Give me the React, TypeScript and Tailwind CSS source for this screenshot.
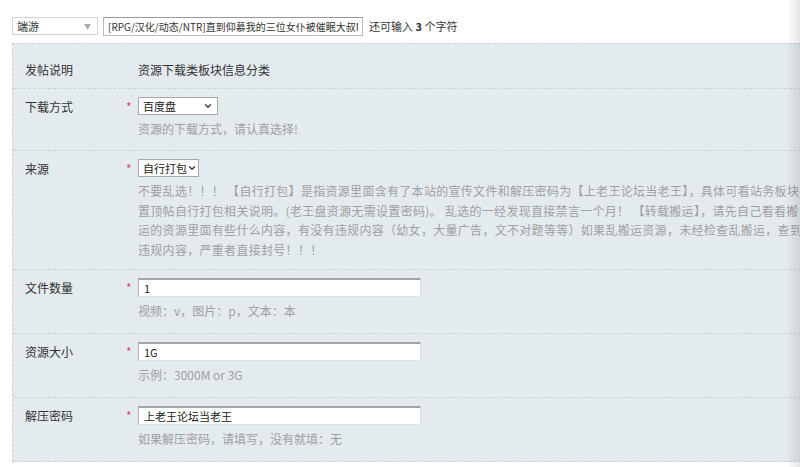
import { ChevronDown } from 'lucide-react'

const font = { fontFamily: '"Noto Sans CJK SC", "Noto Sans", sans-serif' }

function Label({ children }: { children: React.ReactNode }) {
  return <div className="w-[101px] shrink-0 leading-5 text-[12px] text-[#333]">{children}</div>
}

function Star() {
  return <div className="w-[12px] shrink-0 leading-5 text-[12px] text-[#e5484d]">*</div>
}

function Select({ value, width }: { value: string; width: string }) {
  return (
    <div
      className={`${width} h-[18px] flex items-center justify-between whitespace-nowrap bg-white border border-[#a8a8a8] pl-[4px] pr-[4px] text-[11px] text-[#222]`}
    >
      <span>{value}</span>
      <ChevronDown size={10} strokeWidth={3} className="shrink-0 text-[#333]" />
    </div>
  )
}

function TextInput({ value }: { value: string }) {
  return (
    <div className="w-[283px] h-[19px] flex items-center bg-white border border-[#e0e0e0] border-t-2 border-t-[#a5a5a5] border-l-[#b5b5b5] pl-[5px] text-[11px] text-[#222]">
      {value}
    </div>
  )
}

function Hint({ children }: { children: React.ReactNode }) {
  return <div className="mt-1 leading-5 text-[12px] text-[#a0a0a0] whitespace-nowrap">{children}</div>
}

export default function App() {
  return (
    <div className="relative w-[800px] h-[467px] overflow-hidden bg-white" style={font}>
      {/* Title bar */}
      <div className="flex items-start h-[43px] pl-[12px] pt-[17px]">
        <div className="w-[86px] h-[18px] flex items-center justify-between border border-[#d5d5d5] pl-[4px] pr-[6px] text-[11px] text-[#333]">
          <span>端游</span>
          <span className="text-[7px] text-[#aaa]">▼</span>
        </div>
        <div className="ml-[5px] w-[260px] h-[19px] overflow-hidden border border-[#bbb] border-t-[#999]">
          <div className="w-[254px] h-full flex items-center overflow-hidden whitespace-nowrap pl-[4px] text-[10px] text-[#333]">
            [RPG/汉化/动态/NTR]直到仰慕我的三位女仆被催眠大叔N
          </div>
        </div>
        <div className="ml-[6px] h-[19px] flex items-center text-[11px] text-[#333] whitespace-nowrap">
          还可输入&nbsp;<b>3</b>&nbsp;个字符
        </div>
      </div>

      {/* Form panel */}
      <div className="ml-[12px] w-[900px] bg-[#e4ebef] border-t border-l border-dashed border-[#cbd3d8]">
        <div className="flex pl-[12px] pt-[16px] pb-[8px] border-b border-dashed border-[#cbd3d8]">
          <Label>发帖说明</Label>
          <div className="w-[12px]" />
          <div className="leading-5 text-[12px] text-[#333]">资源下载类板块信息分类</div>
        </div>

        <div className="flex pl-[12px] pt-[8px] pb-[11px] border-b border-dashed border-[#cbd3d8]">
          <Label>下载方式</Label>
          <Star />
          <div>
            <Select value="百度盘" width="w-[80px]" />
            <Hint>资源的下载方式，请认真选择!</Hint>
          </div>
        </div>

        <div className="flex pl-[12px] pt-[8px] pb-[10px] border-b border-dashed border-[#cbd3d8]">
          <Label>来源</Label>
          <Star />
          <div>
            <Select value="自行打包" width="w-[61px]" />
            <div className="mt-1 leading-[19.5px] tracking-[0.3px] text-[12px] text-[#a0a0a0] whitespace-nowrap">
              不要乱选！！！ 【自行打包】是指资源里面含有了本站的宣传文件和解压密码为【上老王论坛当老王】，具体可看站务板块
              <br />
              置顶帖自行打包相关说明。(老王盘资源无需设置密码)。 乱选的一经发现直接禁言一个月！ 【转载搬运】，请先自己看看搬
              <br />
              运的资源里面有些什么内容，有没有违规内容（幼女，大量广告，文不对题等等）如果乱搬运资源，未经检查乱搬运，查到
              <br />
              违规内容，严重者直接封号！！！
            </div>
          </div>
        </div>

        <div className="flex pl-[12px] pt-[8px] pb-[12px] border-b border-dashed border-[#cbd3d8]">
          <Label>文件数量</Label>
          <Star />
          <div>
            <TextInput value="1" />
            <Hint>视频：v，图片：p，文本：本</Hint>
          </div>
        </div>

        <div className="flex pl-[12px] pt-[8px] pb-[12px] border-b border-dashed border-[#cbd3d8]">
          <Label>资源大小</Label>
          <Star />
          <div>
            <TextInput value="1G" />
            <Hint>示例：3000M or 3G</Hint>
          </div>
        </div>

        <div className="flex pl-[12px] pt-[8px] pb-[12px] border-b border-dashed border-[#cbd3d8]">
          <Label>解压密码</Label>
          <Star />
          <div>
            <TextInput value="上老王论坛当老王" />
            <Hint>如果解压密码，请填写，没有就填：无</Hint>
          </div>
        </div>
      </div>

      {/* right edge shadow */}
      <div className="absolute top-0 right-0 h-full w-[14px] bg-gradient-to-r from-transparent to-black/10" />
    </div>
  )
}
